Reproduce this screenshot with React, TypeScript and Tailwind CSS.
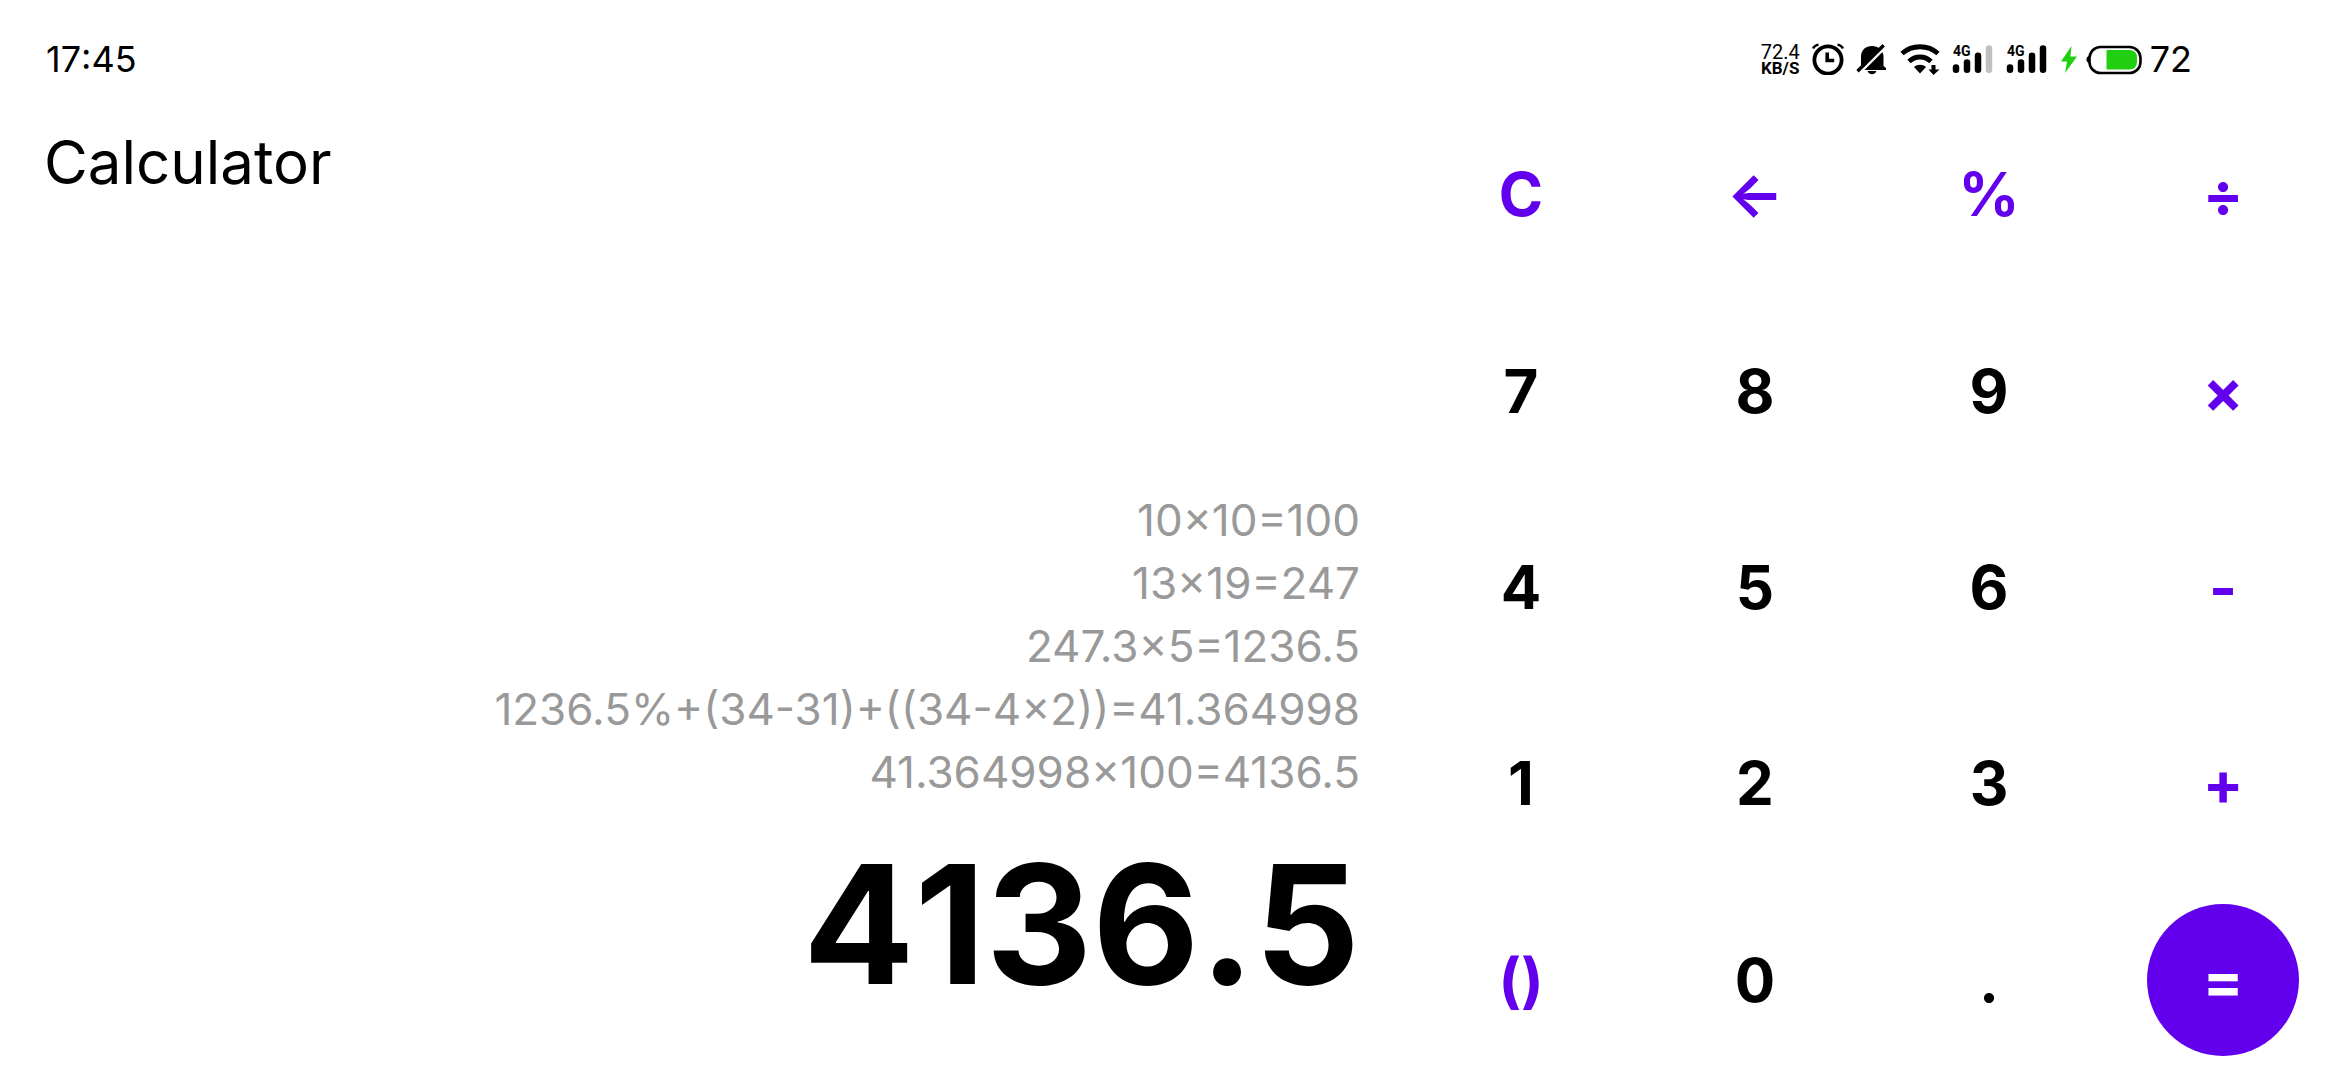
const history = [
  '10×10=100',
  '13×19=247',
  '247.3×5=1236.5',
  '1236.5%+(34-31)+((34-4×2))=41.364998',
  '41.364998×100=4136.5',
];

type Key = { text: string; label: string; kind: 'digit' | 'operator' | 'equals' };

const keys: Key[] = [
  { text: 'C', label: 'Clear', kind: 'operator' },
  { text: '←', label: 'Backspace', kind: 'operator' },
  { text: '%', label: 'Percent', kind: 'operator' },
  { text: '÷', label: 'Divide', kind: 'operator' },
  { text: '7', label: '7', kind: 'digit' },
  { text: '8', label: '8', kind: 'digit' },
  { text: '9', label: '9', kind: 'digit' },
  { text: '×', label: 'Multiply', kind: 'operator' },
  { text: '4', label: '4', kind: 'digit' },
  { text: '5', label: '5', kind: 'digit' },
  { text: '6', label: '6', kind: 'digit' },
  { text: '-', label: 'Subtract', kind: 'operator' },
  { text: '1', label: '1', kind: 'digit' },
  { text: '2', label: '2', kind: 'digit' },
  { text: '3', label: '3', kind: 'digit' },
  { text: '+', label: 'Add', kind: 'operator' },
  { text: '()', label: 'Parentheses', kind: 'operator' },
  { text: '0', label: '0', kind: 'digit' },
  { text: '.', label: 'Decimal point', kind: 'digit' },
  { text: '=', label: 'Equals', kind: 'equals' },
];

const keyStyles = {
  digit: 'text-black',
  operator: 'text-[#6200ee]',
  equals: 'bg-[#6200ee] text-white',
};

function AlarmIcon() {
  return (
    <svg viewBox="0 0 32 32" className="size-8" fill="none" stroke="black">
      <circle cx="16" cy="17" r="13.6" strokeWidth="3.8" />
      <path d="M15.2 9.5v8h7" strokeWidth="3.6" />
      <path d="M1 5.5C2 3.5 4 2 6.5 1.6M31 5.5C30 3.5 28 2 25.500 1.6" strokeWidth="2.400" />
    </svg>
  );
}

function BellOffIcon() {
  return (
    <svg viewBox="0 0 32 32" className="size-8">
      <path
        d="M5 23V13C5.500 6.500 10 3 16 3s11 4 11.500 10v10l2.500 2v2H2.500v-2z"
        fill="black"
      />
      <path d="M11.500 28h9c-1 2.500-2.700 3.200-4.500 3.200S12.500 30.500 11.500 28z" fill="black" />
      <path d="M0 32 31 1" stroke="white" strokeWidth="5" />
      <path d="M1.500 28.300 27.700 2.300" stroke="black" strokeWidth="3.400" />
    </svg>
  );
}

function WifiIcon() {
  return (
    <svg viewBox="0 0 40 32" className="h-8 w-10" fill="none" stroke="black">
      <path d="M2 10.500C12 1.500 28 1.500 38 10.500" strokeWidth="4.800" />
      <path d="M9 18.500C15 12.500 25 12.500 31 18.500" strokeWidth="4.800" />
      <path d="M14 24C17.500 21 22.500 21 26 24L20 30.500z" fill="black" stroke="none" />
      <path d="M31.500 22h4v4.500h4L33.500 32 28.500 26.500h3z" fill="black" stroke="none" />
    </svg>
  );
}

function SignalIcon({ full }: { full: boolean }) {
  return (
    <svg viewBox="0 0 42 32" className="h-8 w-[42px]" stroke="black" strokeWidth="6.500" strokeLinecap="round">
      <path d="M4 24.500v2.300" />
      <path d="M15 19.500v7.300" />
      <path d="M26 12.700v14.100" />
      <path d="M37 5.500v21.300" stroke={full ? 'black' : '#c0c0c0'} />
      <text x="1" y="13" stroke="none" className="font-['Roboto'] text-[14px] font-bold">
        4G
      </text>
    </svg>
  );
}

function BoltIcon() {
  return (
    <svg viewBox="0 0 18 32" className="h-8 w-[18px]" fill="#20d010">
      <path d="M11.500 3 1 18.500h6L5 30 17 13.500h-6.500z" />
    </svg>
  );
}

function BatteryIcon() {
  return (
    <svg viewBox="0 0 56 32" className="h-8 w-14">
      <path d="M4 12.500C1.500 13 .500 14.500 .500 16.500s1 3.500 3.500 4z" fill="black" />
      <rect x="3.500" y="4" width="51" height="26" rx="11" fill="none" stroke="black" strokeWidth="2.600" />
      <path d="M20.500 7H43q8 0 8 8v3.500q0 8-8 8H20.500z" fill="#20d010" />
    </svg>
  );
}

function StatusBar() {
  return (
    <header className="flex h-24 items-center justify-between pt-[22px] pr-[148px] pl-[46px]">
      <time className="text-4xl [font-kerning:none]">17:45</time>
      <div className="flex items-center gap-3">
        <div className="flex flex-col items-center font-['Roboto']">
          <span className="text-xl leading-[18px]">72.4</span>
          <span className="text-[17px] leading-[14px] font-bold">KB/S</span>
        </div>
        <AlarmIcon />
        <BellOffIcon />
        <WifiIcon />
        <SignalIcon full={false} />
        <SignalIcon full />
        <div className="flex items-center gap-2">
          <BoltIcon />
          <BatteryIcon />
          <span className="text-4xl">72</span>
        </div>
      </div>
    </header>
  );
}

export default function App() {
  return (
    <div className="grid h-screen grid-cols-[3fr_2fr] grid-rows-[auto_1fr] bg-white font-['Inter',sans-serif] text-black">
      <div className="col-span-2">
        <StatusBar />
      </div>
      <main className="flex flex-col justify-between pr-11 pb-14 pl-11">
        <h1 className="pt-9 text-6xl font-normal">Calculator</h1>
        <div className="flex flex-col gap-5 text-right">
          <ol className="text-[44px] leading-[63px] font-normal text-[#999999]">
            {history.map((entry) => (
              <li key={entry}>{entry}</li>
            ))}
          </ol>
          <output className="text-[165px] leading-[200px] font-bold [font-kerning:none]">4136.5</output>
        </div>
      </main>
      <section aria-label="Keypad" className="grid grid-cols-4 grid-rows-5 pb-0.5">
        {keys.map(({ text, label, kind }) => (
          <button
            key={label}
            type="button"
            aria-label={label}
            className={`flex size-[152px] items-center justify-center place-self-center rounded-full text-6xl font-bold ${keyStyles[kind]}`}
          >
            {text}
          </button>
        ))}
      </section>
    </div>
  );
}
